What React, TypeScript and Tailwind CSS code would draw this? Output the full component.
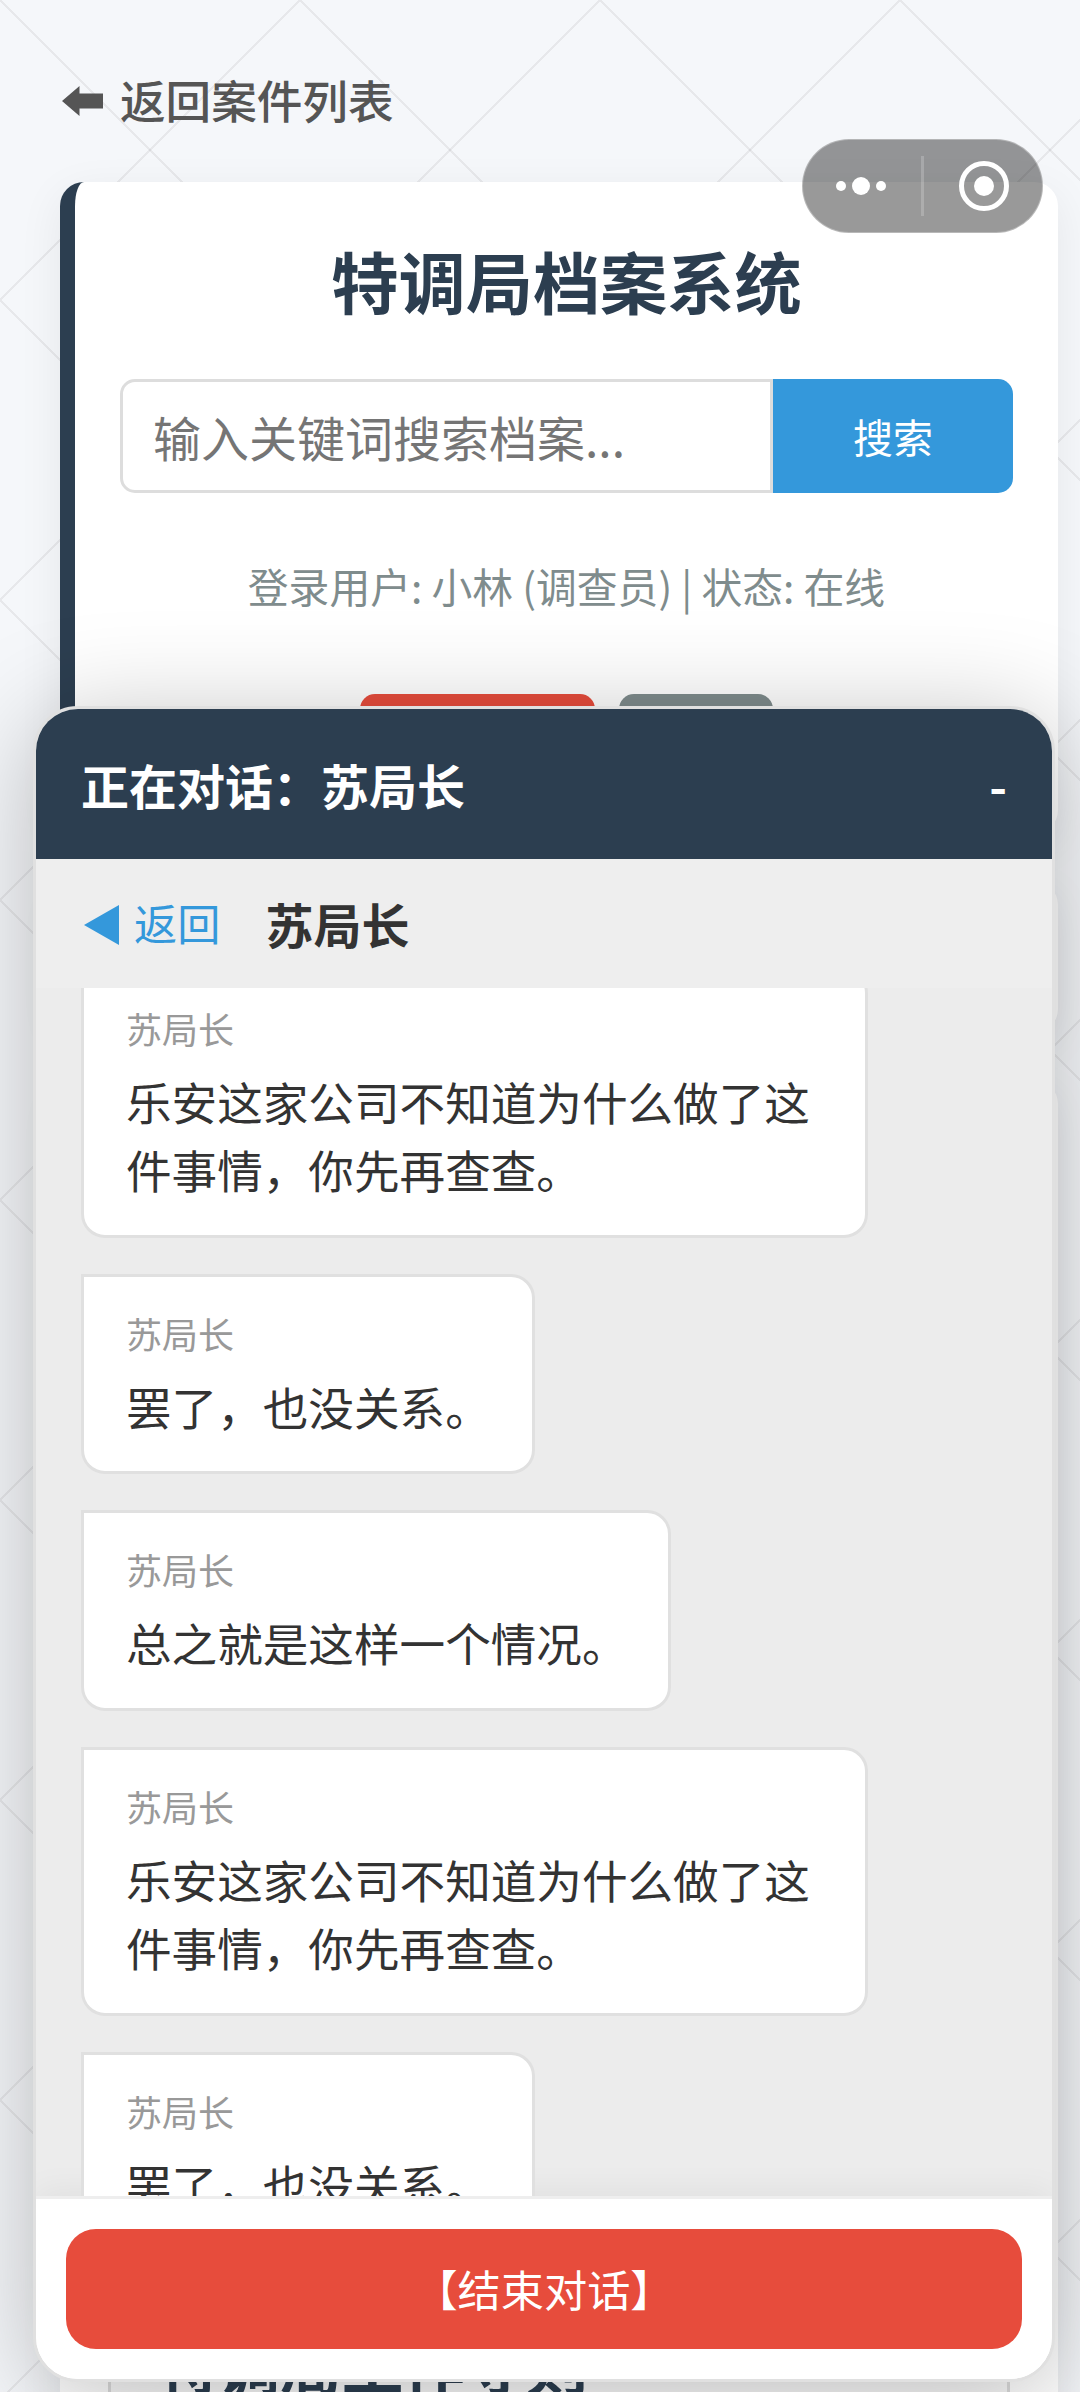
import React, { useState } from "react";
interface Message {
  id: number;
  sender: string;
  text: string;
}
const messages: Message[] = [{
  id: 1,
  sender: "苏局长",
  text: "乐安这家公司不知道为什么做了这件事情，你先再查查。"
}, {
  id: 2,
  sender: "苏局长",
  text: "罢了，也没关系。"
}, {
  id: 3,
  sender: "苏局长",
  text: "总之就是这样一个情况。"
}, {
  id: 4,
  sender: "苏局长",
  text: "乐安这家公司不知道为什么做了这件事情，你先再查查。"
}, {
  id: 5,
  sender: "苏局长",
  text: "罢了，也没关系。"
}];
const BackLink = () => <a className="flex items-center gap-[17px] pl-[2px] h-[68px] text-[45.6px] leading-[68px] font-medium text-[#555]">
    <svg className="mt-[3px]" width="41" height="30" viewBox="0 0 41 30" fill="currentColor">
      <path d="M0 15 17.5 0v7.5H41v15H17.5V30z" />
    </svg>
    返回案件列表
  </a>;
const Capsule = () => <div className="absolute left-[802px] top-[139px] w-[241px] h-[94px] rounded-full bg-black/40 border border-white/30">
    <svg className="block w-full h-full" viewBox="803 140 239 92">
      <g fill="#fff">
        <circle cx="841" cy="186" r="5" />
        <circle cx="861" cy="186" r="9" />
        <circle cx="881" cy="186" r="5" />
        <circle cx="984" cy="186" r="10" />
      </g>
      <rect x="921" y="156" width="3" height="60" fill="#fff" fillOpacity=".2" />
      <circle cx="984" cy="186" r="22.5" fill="none" stroke="#fff" strokeWidth="5" />
    </svg>
  </div>;
const SearchCard = () => {
  const [keyword, setKeyword] = useState("");
  return <section className="h-[652px] p-[45px] bg-white rounded-[24px] border-l-[15px] border-[#2c3e50] shadow-[0_12px_45px_rgba(0,0,0,0.07)]">
      <h1 className="h-[107px] mb-[45px] leading-[105px] text-[67.2px] font-bold text-center text-[#2c3e50]">
        特调局档案系统
      </h1>
      <div className="flex h-[114px]">
        <input value={keyword} onChange={e => setKeyword(e.target.value)} placeholder="输入关键词搜索档案..." className="w-[653px] px-[30px] pb-[1px] text-[48px] border-[3px] border-[#ddd] rounded-l-[15px] placeholder:text-[#757575]" />
        <button className="flex-1 pb-[1px] bg-[#3498db] text-white text-[40px] rounded-r-[15px]">
          搜索
        </button>
      </div>
      <p className="mt-[59px] h-[68px] leading-[68px] text-[40.8px] text-center text-[#7f8c8d]">
        登录用户: 小林 (调查员) | 状态: 在线
      </p>
      <div className="flex justify-center gap-[24px] mt-[74px]">
        <div className="w-[235px] h-[95px] rounded-[15px] bg-[#e74c3c]" />
        <div className="w-[154px] h-[95px] rounded-[15px] bg-[#7f8c8d]" />
      </div>
    </section>;
};
const Bubble = ({ message }: { message: Message }) => <div className="relative max-w-[787px] pl-[42px] pr-[40.8px] pt-[29.2px] pb-[31px] bg-white border-[3px] border-[#e0e0e0] rounded-[24px] rounded-tl-none">
    <div className="h-[54px] mb-[12px] text-[36px] leading-[54px] text-[#999]">{message.sender}</div>
    <div className="text-[45.6px] leading-[68.4px] text-[#333]">{message.text}</div>
  </div>;
const ChatPanel = () => <div className="absolute left-[33px] top-[706px] w-[1022px] h-[1676px] flex flex-col overflow-hidden rounded-[45px] border-[3px] border-[#e0e0e0] bg-white shadow-[0_15px_105px_rgba(0,0,0,0.25)]">
    <header className="flex items-center justify-between h-[150px] shrink-0 px-[45px] bg-[#2c3e50] text-white text-[48px] font-bold">
      <span>正在对话：苏局长</span>
      <span>-</span>
    </header>
    <div className="flex items-center h-[129px] shrink-0 pl-[48px] bg-[#eeeeee]">
      <button className="flex items-center gap-[15px] pb-[2px] text-[43.2px] text-[#3498db]">
        <svg className="mt-[5px]" width="35" height="40" viewBox="0 0 35 40" fill="currentColor">
          <path d="M0 20 35 0v40z" />
        </svg>
        返回
      </button>
      <span className="ml-[45px] pb-[2px] text-[48px] font-bold text-[#333]">苏局长</span>
    </div>
    <div className="flex-1 min-h-0 overflow-hidden px-[45px] bg-[#ececec]">
      <div className="flex flex-col items-start gap-[36px] -mt-[19.4px]">
        {messages.map(message => <Bubble key={message.id} message={message} />)}
      </div>
    </div>
    <footer className="shrink-0 p-[30px] bg-white border-t-[3px] border-[#eee] shadow-[0_-6px_30px_rgba(0,0,0,0.05)]">
      <button className="block w-full h-[120px] pb-[2px] rounded-[30px] bg-[#e74c3c] text-white text-[43.2px]">
        【结束对话】
      </button>
    </footer>
  </div>;
export default function App() {
  return <main className="relative h-[2392px] w-[1080px] overflow-hidden bg-[#f5f7fa] bg-[linear-gradient(45deg,transparent_49.8%,rgba(0,0,0,0.06)_49.8%,rgba(0,0,0,0.06)_50.2%,transparent_50.2%),linear-gradient(-45deg,transparent_49.8%,rgba(0,0,0,0.06)_49.8%,rgba(0,0,0,0.06)_50.2%,transparent_50.2%)] bg-[length:300px_300px] font-['Noto_Sans_CJK_SC',sans-serif]">
      <div className="flex flex-col w-[998px] ml-[60px] pt-[65px]">
        <BackLink />
        <div className="flex flex-col gap-[47px] mt-[49px]">
          <SearchCard />
          <section className="h-[152px] bg-white rounded-[24px] shadow-[0_12px_45px_rgba(0,0,0,0.07)]" />
          <section className="h-[1600px] p-[48px] bg-white rounded-[24px] shadow-[0_12px_45px_rgba(0,0,0,0.07)]">
            <div className="flex flex-col h-full px-[46px] pt-[1189px] bg-[#fafafa] border-[3px] border-[#ddd]">
              <h2 className="text-[61.6px] leading-[90px] font-bold text-[#2c3e50]">特调局工作守则</h2>
            </div>
          </section>
        </div>
      </div>
      <ChatPanel />
      <Capsule />
    </main>;
}
